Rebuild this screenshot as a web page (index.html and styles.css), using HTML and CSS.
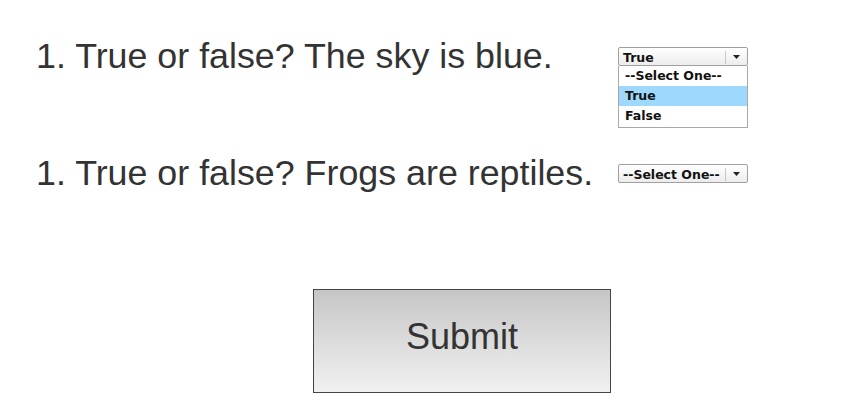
FILE: index.html
```html
<!DOCTYPE html>
<html>
<head>
<meta charset="utf-8">
<link rel="stylesheet" href="styles.css">
</head>
<body>
<div class="page">
  <div class="question q1">
    <div class="qtext">1. True or false? The sky is blue.</div>
    <div class="select-wrap">
      <div class="select">
        <span class="value">True</span>
        <span class="arrow"><svg width="7" height="4" viewBox="0 0 7 4"><path d="M0 0H7L3.5 4Z" fill="#222"/></svg></span>
      </div>
      <div class="menu">
        <div class="opt">--Select One--</div>
        <div class="opt sel">True</div>
        <div class="opt">False</div>
      </div>
    </div>
  </div>
  <div class="question q2">
    <div class="qtext">1. True or false? Frogs are reptiles.</div>
    <div class="select-wrap">
      <div class="select">
        <span class="value">--Select One--</span>
        <span class="arrow"><svg width="7" height="4" viewBox="0 0 7 4"><path d="M0 0H7L3.5 4Z" fill="#222"/></svg></span>
      </div>
    </div>
  </div>
  <div class="actions">
    <button class="submit">Submit</button>
  </div>
</div>
</body>
</html>
```
FILE: styles.css
```css
html, body {
  margin: 0;
  padding: 0;
  background: #ffffff;
}
.page {
  width: 846px;
  height: 410px;
  padding: 36px 0 0 36px;
  box-sizing: border-box;
  font-family: "Liberation Sans", Arial, sans-serif;
  color: #333333;
}
.question {
  display: grid;
  grid-template-columns: 582px 130px;
  align-items: start;
}
.q2 {
  margin-top: 77px;
}
.qtext {
  font-size: 35.8px;
  line-height: 40px;
}
.select-wrap {
  position: relative;
  margin-top: 11px;
}
.select {
  height: 19px;
  box-sizing: border-box;
  border: 1px solid #a0a0a0;
  border-radius: 2px;
  background: linear-gradient(#ffffff, #ececec);
  display: flex;
  align-items: center;
  font-family: "DejaVu Sans", Verdana, sans-serif;
  font-size: 12.5px;
  font-weight: bold;
  color: #111;
}
.value {
  flex: 1;
  padding-left: 4px;
  height: 13px;
  line-height: 13px;
  margin-top: 2px;
  border-right: 1px solid #c8c8c8;
  white-space: nowrap;
}
.arrow {
  width: 21px;
  display: flex;
  justify-content: center;
  align-items: center;
}
.menu {
  position: absolute;
  left: 0;
  top: 19px;
  width: 130px;
  box-sizing: border-box;
  border: 1px solid #a8a8a8;
  border-top: none;
  background: #fff;
  font-family: "DejaVu Sans", Verdana, sans-serif;
  font-size: 12.5px;
  font-weight: bold;
  color: #111;
  padding-bottom: 1px;
}
.opt {
  height: 20px;
  line-height: 20px;
  padding-left: 6px;
}
.opt.sel {
  background: #9ed8fd;
}
.actions {
  display: flex;
  padding-left: 277px;
  margin-top: 96px;
}
.submit {
  width: 298px;
  height: 104px;
  box-sizing: border-box;
  border: 1px solid #444444;
  background: linear-gradient(#c6c6c6, #f1f1f1);
  font-family: "Liberation Sans", Arial, sans-serif;
  font-size: 36px;
  color: #333333;
  padding: 0 0 8px 0;
  margin: 0;
}
```
